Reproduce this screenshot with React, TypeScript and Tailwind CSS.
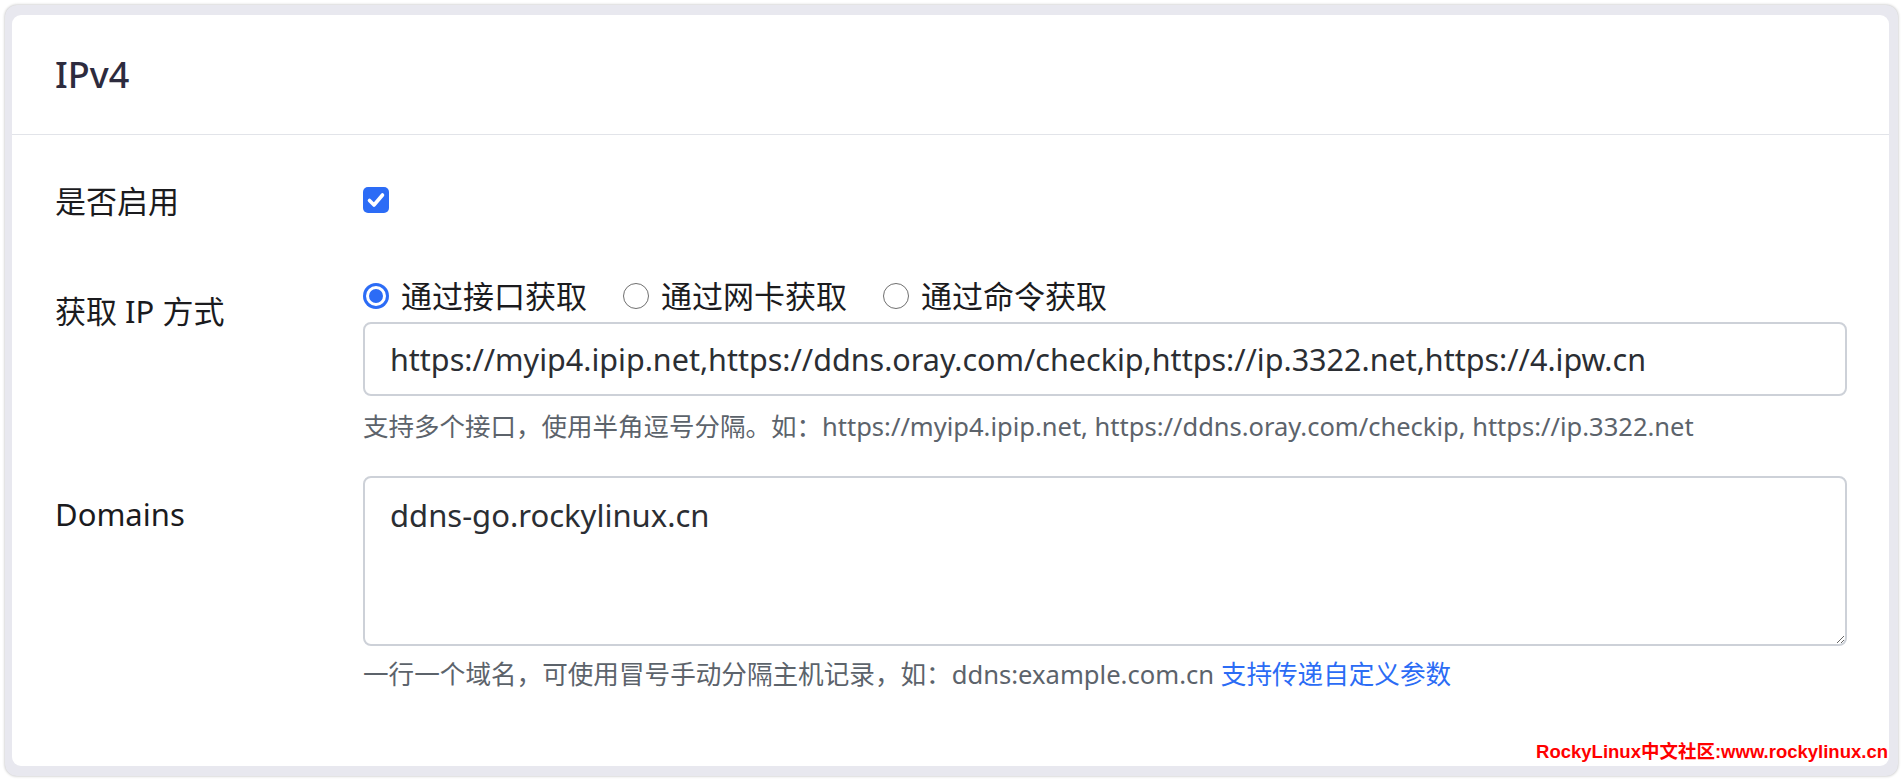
const Radio = ({ checked, label }: { checked?: boolean; label: string }) => (
    <label className="flex items-center gap-[12px]">
        {checked ? (
            <span className="flex h-[26px] w-[26px] items-center justify-center rounded-full bg-[#2c6cf6]">
                <span className="h-[20px] w-[20px] rounded-full border-[3px] border-white bg-[#2c6cf6]" />
            </span>
        ) : (
            <span className="h-[26px] w-[26px] rounded-full border-[1.5px] border-[#6f6f6f] bg-white" />
        )}
        <span>{label}</span>
    </label>
)

const App = () => {
    return (
        <div className="min-h-screen bg-white pt-[5px] pl-[5px] pr-[6px] pb-[6px] font-['Noto_Sans','Noto_Sans_CJK_SC',sans-serif] text-[#1b1b1e]">
            {/* window frame */}
            <div className="rounded-[12px] bg-[#e8e8ef] pt-[10px] pl-[7px] pr-[9px] pb-[10px] shadow-[0_0_3px_rgba(0,0,0,0.3)]">
                <div className="relative h-[751px] rounded-[9px] bg-white">
                    {/* Header */}
                    <div className="flex h-[120px] items-center border-b border-[#e2e4e9] px-[43px] text-[36px] font-medium text-[#2d2b3e]">
                        IPv4
                    </div>

                    <div className="pl-[43px] pr-[42px] pt-[43px] text-[31px]">
                        {/* 是否启用 */}
                        <div className="flex h-[46px] items-center">
                            <div className="w-[308px] leading-[46px]">是否启用</div>
                            <span className="-mt-[3px] flex h-[26px] w-[26px] items-center justify-center rounded-[5px] bg-[#2c6cf6]">
                                <svg viewBox="0 0 26 26" className="h-[26px] w-[26px]">
                                    <path d="M6.5 13.5 L11 18 L19.5 8" fill="none" stroke="white" strokeWidth="3.6" strokeLinecap="round" strokeLinejoin="round" />
                                </svg>
                            </span>
                        </div>

                        {/* 获取 IP 方式 */}
                        <div className="mt-[49px] flex">
                            <div className="w-[308px] shrink-0 pt-[15px] leading-[46px]">获取 IP 方式</div>
                            <div className="flex-1">
                                <div className="flex h-[46px] items-center gap-[36px]">
                                    <Radio checked label="通过接口获取" />
                                    <Radio label="通过网卡获取" />
                                    <Radio label="通过命令获取" />
                                </div>
                                <input
                                    className="mt-[3px] h-[74px] w-full rounded-[8px] border-2 border-[#cdd1d8] px-[25px] text-[30.5px] text-[#2b2e33] outline-none"
                                    defaultValue="https://myip4.ipip.net,https://ddns.oray.com/checkip,https://ip.3322.net,https://4.ipw.cn"
                                />
                                <div className="mt-[12px] text-[25.5px] leading-[36px] text-[#5c636b]">
                                    支持多个接口，使用半角逗号分隔。如：https://myip4.ipip.net, https://ddns.oray.com/checkip, https://ip.3322.net
                                </div>
                            </div>
                        </div>

                        {/* Domains */}
                        <div className="mt-[32px] flex">
                            <div className="w-[308px] shrink-0 pt-[15px] leading-[46px]">Domains</div>
                            <div className="flex-1">
                                <textarea
                                    className="block h-[170px] w-full rounded-[8px] border-2 border-[#cdd1d8] px-[25px] pt-[14px] text-[31px] leading-[46px] text-[#2b2e33] outline-none"
                                    defaultValue="ddns-go.rockylinux.cn"
                                />
                                <div className="mt-[11px] text-[25.6px] leading-[36px] text-[#5c636b]">
                                    一行一个域名，可使用冒号手动分隔主机记录，如：ddns:example.com.cn <a className="text-[#2b6cf5]">支持传递自定义参数</a>
                                </div>
                            </div>
                        </div>
                    </div>

                    {/* watermark */}
                    <div className="absolute right-[1px] bottom-[2px] font-['Liberation_Sans','Noto_Sans_CJK_SC',sans-serif] text-[18.5px] leading-[24px] font-bold text-[#ff0000]">
                        RockyLinux中文社区:www.rockylinux.cn
                    </div>
                </div>
            </div>
        </div>
    )
}

export default App
